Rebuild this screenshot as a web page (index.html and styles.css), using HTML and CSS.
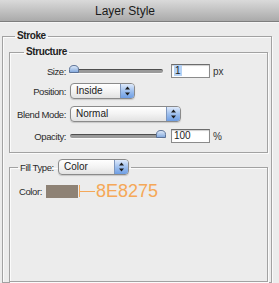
FILE: index.html
```html
<!DOCTYPE html>
<html lang="en">
<head>
    <meta charset="UTF-8">
    <title>Layer Style</title>
    <link rel="stylesheet" href="styles.css">
</head>
<body>
    <!-- Dialog title -->
    <div class="titlebar">Layer Style</div>

    <fieldset class="group outer">
        <legend class="heading">Stroke</legend>

        <!-- Structure group -->
        <fieldset class="group inner structure">
            <legend class="heading">Structure</legend>

            <div class="row row-size">
                <span class="label">Size:</span>
                <div class="slider">
                    <svg class="thumb thumb-left" width="10" height="8" viewBox="0 0 10 8">
                        <defs>
                            <linearGradient id="tg1" x1="0" y1="0" x2="0" y2="1">
                                <stop offset="0" stop-color="#e4eefb"/>
                                <stop offset="1" stop-color="#7fa6dc"/>
                            </linearGradient>
                        </defs>
                        <path d="M0.5 7.5 L0.5 4.5 Q0.5 0.5 5 0.5 Q9.5 0.5 9.5 4.5 L9.5 7.5 Z" fill="url(#tg1)" stroke="#5d7397"/>
                    </svg>
                </div>
                <div class="textbox"><span class="selected">1</span></div>
                <span class="unit">px</span>
            </div>

            <div class="row row-position">
                <span class="label">Position:</span>
                <div class="popup popup-short">
                    <span class="popup-text">Inside</span>
                    <span class="stepper">
                        <svg width="7" height="10" viewBox="0 0 7 10"><path d="M3.5 0.5 L6 3.5 L1 3.5 Z M3.5 9.5 L6 6.5 L1 6.5 Z" fill="#1b1b1b"/></svg>
                    </span>
                </div>
            </div>

            <div class="row row-blend">
                <span class="label">Blend Mode:</span>
                <div class="popup popup-wide">
                    <span class="popup-text">Normal</span>
                    <span class="stepper">
                        <svg width="7" height="10" viewBox="0 0 7 10"><path d="M3.5 0.5 L6 3.5 L1 3.5 Z M3.5 9.5 L6 6.5 L1 6.5 Z" fill="#1b1b1b"/></svg>
                    </span>
                </div>
            </div>

            <div class="row row-opacity">
                <span class="label">Opacity:</span>
                <div class="slider">
                    <svg class="thumb thumb-right" width="10" height="8" viewBox="0 0 10 8">
                        <defs>
                            <linearGradient id="tg2" x1="0" y1="0" x2="0" y2="1">
                                <stop offset="0" stop-color="#e4eefb"/>
                                <stop offset="1" stop-color="#7fa6dc"/>
                            </linearGradient>
                        </defs>
                        <path d="M0.5 7.5 L0.5 4.5 Q0.5 0.5 5 0.5 Q9.5 0.5 9.5 4.5 L9.5 7.5 Z" fill="url(#tg2)" stroke="#5d7397"/>
                    </svg>
                </div>
                <div class="textbox">100</div>
                <span class="unit">%</span>
            </div>
        </fieldset>

        <!-- Fill group -->
        <fieldset class="group inner fill">
            <legend class="fill-legend">
                <span class="fill-label">Fill Type:</span>
                <div class="popup popup-fill">
                    <span class="popup-text">Color</span>
                    <span class="stepper">
                        <svg width="7" height="10" viewBox="0 0 7 10"><path d="M3.5 0.5 L6 3.5 L1 3.5 Z M3.5 9.5 L6 6.5 L1 6.5 Z" fill="#1b1b1b"/></svg>
                    </span>
                </div>
            </legend>

            <div class="color-row">
                <span class="color-label">Color:</span>
                <span class="swatch"></span>
                <span class="leader"></span>
                <span class="hex">8E8275</span>
            </div>
        </fieldset>
    </fieldset>
</body>
</html>
```

FILE: styles.css
```css
body {
    margin: 0;
    width: 279px;
    height: 283px;
    overflow: hidden;
    background: #ececec;
    font-family: 'Liberation Sans', Arial, sans-serif;
    font-size: 10px;
    color: #1e1e1e;
}

.titlebar {
    height: 21px;
    line-height: 22px;
    padding-left: 95px;
    font-size: 12px;
    color: #1a1a1a;
    background: linear-gradient(#dadada, #aaaaaa);
    border-bottom: 1px solid #7e7e7e;
    box-shadow: 0 1px 0 #f6f6f6;
}

.group {
    box-sizing: border-box;
    margin: 0;
    border: 1px solid #a2a2a2;
    box-shadow: 1px 1px 0 #fbfbfb, inset 1px 1px 0 #fbfbfb;
}

.heading {
    padding: 0 2px;
    line-height: 12px;
    font-weight: bold;
    letter-spacing: -0.4px;
    color: #222;
}

.outer {
    margin: 8px 0 0 2px;
    width: 270px;
    height: 253px;
    padding: 4px 0 0 6px;
}

.outer > .heading {
    margin-left: 6px;
}

.inner {
    width: 259px;
    padding: 0;
}

.structure {
    padding: 5px 0 8px 0;
}

.structure > .heading {
    margin-left: 14px;
}

.row {
    display: flex;
    align-items: center;
    height: 16px;
}

.row-position {
    margin-top: 4px;
}

.row-blend {
    margin-top: 7px;
}

.row-opacity {
    margin-top: 6px;
}

.label {
    width: 56px;
    margin-right: 4px;
    text-align: right;
    font-size: 9.5px;
    letter-spacing: -0.4px;
    color: #2a2a2a;
    white-space: nowrap;
}

.slider {
    position: relative;
    width: 93px;
    height: 3px;
    margin-right: 8px;
    border-radius: 2px;
    background: #9a9a9a;
    border-top: 1px solid #4e4e4e;
    box-shadow: 0 1px 0 #fafafa;
}

.thumb {
    position: absolute;
    top: -5px;
    display: block;
}

.thumb-left {
    left: -1px;
}

.thumb-right {
    right: -3px;
}

.textbox {
    box-sizing: border-box;
    width: 39px;
    height: 14px;
    padding: 0 2px;
    line-height: 12px;
    background: #fff;
    border: 1px solid #8b8b8b;
    border-top-color: #6c6c6c;
    box-shadow: inset 0 1px 1px #cfcfcf;
    font-size: 10px;
}

.selected {
    background: #b6d3f6;
    padding: 0 1px;
}

.unit {
    margin-left: 3px;
    color: #333;
}

.popup {
    box-sizing: border-box;
    display: flex;
    flex-shrink: 0;
    align-items: stretch;
    height: 16px;
    border: 1px solid #8a8a8a;
    border-radius: 4px;
    background: linear-gradient(#ffffff, #f3f3f3 50%, #e2e2e2);
    box-shadow: 0 1px 1px #c8c8c8;
    overflow: hidden;
}

.popup-short {
    width: 65px;
}

.popup-wide {
    width: 111px;
}

.popup-fill {
    width: 71px;
}

.popup-text {
    flex: 1;
    padding-left: 5px;
    line-height: 14px;
    color: #1a1a1a;
}

.stepper {
    display: flex;
    align-items: center;
    justify-content: center;
    width: 13px;
    border-left: 1px solid #7d96bd;
    background: linear-gradient(#dfeafb, #9fc0ee 50%, #6e9ee4);
}

.fill {
    height: 123px;
    margin-top: 6px;
    padding: 9px 0 0 9px;
}

.fill-legend {
    display: flex;
    align-items: center;
    margin-left: -1px;
    padding: 0 2px;
}

.fill-label {
    flex-shrink: 0;
    width: 34px;
    margin-right: 4px;
    font-size: 9.5px;
    letter-spacing: -0.4px;
    color: #2a2a2a;
    white-space: nowrap;
}

.color-row {
    display: flex;
    align-items: center;
    height: 14px;
}

.color-label {
    width: 27px;
    font-size: 9.5px;
    letter-spacing: -0.4px;
    color: #2a2a2a;
}

.swatch {
    width: 32px;
    height: 13px;
    background: #8e8275;
}

.leader {
    width: 15px;
    height: 12px;
    margin-left: 1px;
    border-left: 1px solid #f4a85a;
    background: linear-gradient(#f4a85a, #f4a85a) center / 100% 1px no-repeat;
}

.hex {
    margin-left: 1px;
    font-size: 18px;
    line-height: 14px;
    color: #f5a858;
}
```
